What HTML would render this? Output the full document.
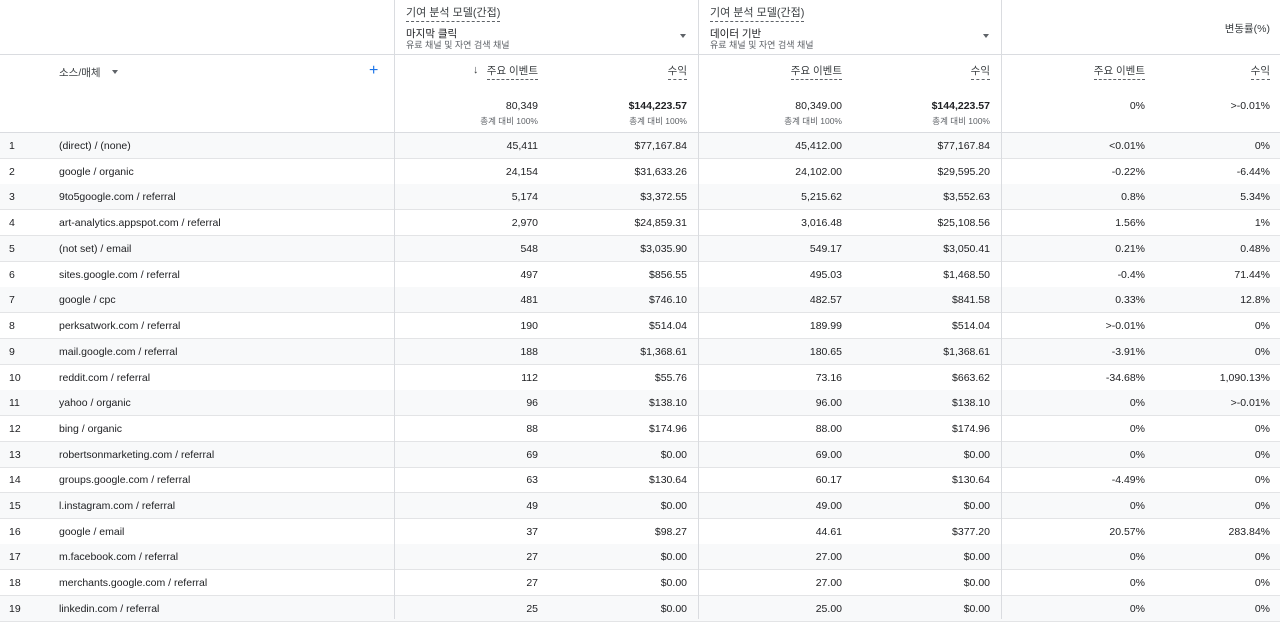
<!DOCTYPE html>
<html><head><meta charset="utf-8">
<style>
*{margin:0;padding:0;box-sizing:border-box}
body{width:1280px;height:619px;overflow:hidden;background:#fff;font-family:"Liberation Sans","Noto Sans CJK KR",sans-serif;color:#202124;font-size:10.5px;position:relative}
.vl{position:absolute;top:0;bottom:0;width:1px;background:#dadce0}
.hl{position:absolute;left:0;right:0;height:1px;background:#dadce0}
.t{position:absolute;white-space:nowrap}
.r{text-align:right}
.ul{border-bottom:1px dashed #5f6368;padding-bottom:1px}
.row{position:absolute;left:0;width:1280px;height:26px;border-bottom:1px solid #e3e4e6}
.row.g{background:#f8f9fa}
.row span{position:absolute;top:7px;white-space:nowrap}
.hsub{color:#5f6368;font-size:9px}
.arr{position:absolute;width:0;height:0;border-left:3.5px solid transparent;border-right:3.5px solid transparent;border-top:4px solid #5f6368}
</style></head><body>
<div class="hl" style="top:54px"></div>
<div class="hl" style="top:132px"></div>

<div class="t ul" style="left:406px;top:4px;font-size:11px;color:#3c4043">기여 분석 모델(간접)</div>
<div class="t" style="left:406px;top:26px;font-size:10.5px">마지막 클릭</div>
<div class="t hsub" style="left:406px;top:38px">유료 채널 및 자연 검색 채널</div>
<div class="arr" style="left:680px;top:34px"></div>

<div class="t ul" style="left:710px;top:4px;font-size:11px;color:#3c4043">기여 분석 모델(간접)</div>
<div class="t" style="left:710px;top:26px;font-size:10.5px">데이터 기반</div>
<div class="t hsub" style="left:710px;top:38px">유료 채널 및 자연 검색 채널</div>
<div class="arr" style="left:983px;top:34px"></div>

<div class="t" style="right:10px;top:21px;font-size:10.5px;color:#3c4043">변동률(%)</div>

<div class="t" style="left:59px;top:65px;font-size:10.5px;color:#3c4043">소스/매체</div>
<div class="arr" style="left:112px;top:70px"></div>
<div class="t" style="left:369px;top:62px;font-size:16px;color:#1a73e8">+</div>

<div class="t" style="left:473px;top:64px;font-size:11px;color:#3c4043">↓</div>
<div class="t ul" style="right:742px;top:63px;font-size:10.5px;color:#3c4043">주요 이벤트</div>
<div class="t ul" style="right:593px;top:63px;font-size:10.5px;color:#3c4043">수익</div>
<div class="t ul" style="right:438px;top:63px;font-size:10.5px;color:#3c4043">주요 이벤트</div>
<div class="t ul" style="right:290px;top:63px;font-size:10.5px;color:#3c4043">수익</div>
<div class="t ul" style="right:135px;top:63px;font-size:10.5px;color:#3c4043">주요 이벤트</div>
<div class="t ul" style="right:10px;top:63px;font-size:10.5px;color:#3c4043">수익</div>

<div class="t r" style="right:742px;top:100px;font-size:10.5px">80,349</div>
<div class="t r hsub" style="right:742px;top:115px;font-size:8.5px">총계 대비 100%</div>
<div class="t r" style="right:593px;top:100px;font-size:10.5px;font-weight:bold">$144,223.57</div>
<div class="t r hsub" style="right:593px;top:115px;font-size:8.5px">총계 대비 100%</div>
<div class="t r" style="right:438px;top:100px;font-size:10.5px">80,349.00</div>
<div class="t r hsub" style="right:438px;top:115px;font-size:8.5px">총계 대비 100%</div>
<div class="t r" style="right:290px;top:100px;font-size:10.5px;font-weight:bold">$144,223.57</div>
<div class="t r hsub" style="right:290px;top:115px;font-size:8.5px">총계 대비 100%</div>
<div class="t r" style="right:135px;top:100px;font-size:10.5px">0%</div>
<div class="t r" style="right:10px;top:100px;font-size:10.5px">&gt;-0.01%</div>

<div class="row g" style="top:133px"><span style="left:9px">1</span><span style="left:59px">(direct) / (none)</span><span style="right:742px">45,411</span><span style="right:593px">$77,167.84</span><span style="right:438px">45,412.00</span><span style="right:290px">$77,167.84</span><span style="right:135px">&lt;0.01%</span><span style="right:10px">0%</span></div>
<div class="row" style="top:159px"><span style="left:9px">2</span><span style="left:59px">google / organic</span><span style="right:742px">24,154</span><span style="right:593px">$31,633.26</span><span style="right:438px">24,102.00</span><span style="right:290px">$29,595.20</span><span style="right:135px">-0.22%</span><span style="right:10px">-6.44%</span></div>
<div class="row g" style="top:184px"><span style="left:9px">3</span><span style="left:59px">9to5google.com / referral</span><span style="right:742px">5,174</span><span style="right:593px">$3,372.55</span><span style="right:438px">5,215.62</span><span style="right:290px">$3,552.63</span><span style="right:135px">0.8%</span><span style="right:10px">5.34%</span></div>
<div class="row" style="top:210px"><span style="left:9px">4</span><span style="left:59px">art-analytics.appspot.com / referral</span><span style="right:742px">2,970</span><span style="right:593px">$24,859.31</span><span style="right:438px">3,016.48</span><span style="right:290px">$25,108.56</span><span style="right:135px">1.56%</span><span style="right:10px">1%</span></div>
<div class="row g" style="top:236px"><span style="left:9px">5</span><span style="left:59px">(not set) / email</span><span style="right:742px">548</span><span style="right:593px">$3,035.90</span><span style="right:438px">549.17</span><span style="right:290px">$3,050.41</span><span style="right:135px">0.21%</span><span style="right:10px">0.48%</span></div>
<div class="row" style="top:262px"><span style="left:9px">6</span><span style="left:59px">sites.google.com / referral</span><span style="right:742px">497</span><span style="right:593px">$856.55</span><span style="right:438px">495.03</span><span style="right:290px">$1,468.50</span><span style="right:135px">-0.4%</span><span style="right:10px">71.44%</span></div>
<div class="row g" style="top:287px"><span style="left:9px">7</span><span style="left:59px">google / cpc</span><span style="right:742px">481</span><span style="right:593px">$746.10</span><span style="right:438px">482.57</span><span style="right:290px">$841.58</span><span style="right:135px">0.33%</span><span style="right:10px">12.8%</span></div>
<div class="row" style="top:313px"><span style="left:9px">8</span><span style="left:59px">perksatwork.com / referral</span><span style="right:742px">190</span><span style="right:593px">$514.04</span><span style="right:438px">189.99</span><span style="right:290px">$514.04</span><span style="right:135px">&gt;-0.01%</span><span style="right:10px">0%</span></div>
<div class="row g" style="top:339px"><span style="left:9px">9</span><span style="left:59px">mail.google.com / referral</span><span style="right:742px">188</span><span style="right:593px">$1,368.61</span><span style="right:438px">180.65</span><span style="right:290px">$1,368.61</span><span style="right:135px">-3.91%</span><span style="right:10px">0%</span></div>
<div class="row" style="top:365px"><span style="left:9px">10</span><span style="left:59px">reddit.com / referral</span><span style="right:742px">112</span><span style="right:593px">$55.76</span><span style="right:438px">73.16</span><span style="right:290px">$663.62</span><span style="right:135px">-34.68%</span><span style="right:10px">1,090.13%</span></div>
<div class="row g" style="top:390px"><span style="left:9px">11</span><span style="left:59px">yahoo / organic</span><span style="right:742px">96</span><span style="right:593px">$138.10</span><span style="right:438px">96.00</span><span style="right:290px">$138.10</span><span style="right:135px">0%</span><span style="right:10px">&gt;-0.01%</span></div>
<div class="row" style="top:416px"><span style="left:9px">12</span><span style="left:59px">bing / organic</span><span style="right:742px">88</span><span style="right:593px">$174.96</span><span style="right:438px">88.00</span><span style="right:290px">$174.96</span><span style="right:135px">0%</span><span style="right:10px">0%</span></div>
<div class="row g" style="top:442px"><span style="left:9px">13</span><span style="left:59px">robertsonmarketing.com / referral</span><span style="right:742px">69</span><span style="right:593px">$0.00</span><span style="right:438px">69.00</span><span style="right:290px">$0.00</span><span style="right:135px">0%</span><span style="right:10px">0%</span></div>
<div class="row" style="top:467px"><span style="left:9px">14</span><span style="left:59px">groups.google.com / referral</span><span style="right:742px">63</span><span style="right:593px">$130.64</span><span style="right:438px">60.17</span><span style="right:290px">$130.64</span><span style="right:135px">-4.49%</span><span style="right:10px">0%</span></div>
<div class="row g" style="top:493px"><span style="left:9px">15</span><span style="left:59px">l.instagram.com / referral</span><span style="right:742px">49</span><span style="right:593px">$0.00</span><span style="right:438px">49.00</span><span style="right:290px">$0.00</span><span style="right:135px">0%</span><span style="right:10px">0%</span></div>
<div class="row" style="top:519px"><span style="left:9px">16</span><span style="left:59px">google / email</span><span style="right:742px">37</span><span style="right:593px">$98.27</span><span style="right:438px">44.61</span><span style="right:290px">$377.20</span><span style="right:135px">20.57%</span><span style="right:10px">283.84%</span></div>
<div class="row g" style="top:544px"><span style="left:9px">17</span><span style="left:59px">m.facebook.com / referral</span><span style="right:742px">27</span><span style="right:593px">$0.00</span><span style="right:438px">27.00</span><span style="right:290px">$0.00</span><span style="right:135px">0%</span><span style="right:10px">0%</span></div>
<div class="row" style="top:570px"><span style="left:9px">18</span><span style="left:59px">merchants.google.com / referral</span><span style="right:742px">27</span><span style="right:593px">$0.00</span><span style="right:438px">27.00</span><span style="right:290px">$0.00</span><span style="right:135px">0%</span><span style="right:10px">0%</span></div>
<div class="row g" style="top:596px"><span style="left:9px">19</span><span style="left:59px">linkedin.com / referral</span><span style="right:742px">25</span><span style="right:593px">$0.00</span><span style="right:438px">25.00</span><span style="right:290px">$0.00</span><span style="right:135px">0%</span><span style="right:10px">0%</span></div>

<div class="vl" style="left:394px"></div>
<div class="vl" style="left:698px"></div>
<div class="vl" style="left:1001px"></div>
</body></html>
